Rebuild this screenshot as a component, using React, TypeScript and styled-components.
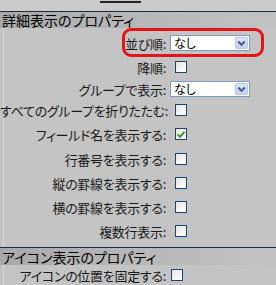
import React from "react";
import styled, { createGlobalStyle } from "styled-components";

const Global = createGlobalStyle`
  html, body { margin: 0; padding: 0; background: #c4c4c4; }
  body { width: 276px; height: 285px; overflow: hidden; }
  * { box-sizing: border-box; }
`;

const Page = styled.div`
  position: relative;
  width: 276px;
  height: 285px;
  background: #c4c4c4;
  font-family: "Noto Sans CJK JP", "Noto Sans", sans-serif;
  font-feature-settings: "palt";
  color: #111;
  overflow: hidden;
`;

const TopStrip = styled.div`
  height: 11px;
  background: #cbcbcb;
  display: flex;
  align-items: flex-start;
`;

const TabMark = styled.div`
  margin-left: 100px;
  margin-top: 1px;
  width: 41px;
  height: 2px;
  background: #262626;
`;

const SectionHeader = styled.div<{ $h: number }>`
  height: ${(p) => p.$h}px;
  border-top: 1px solid #1e2d3d;
  background: linear-gradient(90deg, #a9a9a9 0%, #b6b6b6 45%, #c2c2c2 100%);
  padding-left: 2px;
  display: flex;
  align-items: center;
  font-size: 14px;
  line-height: 1;
  color: #000;
  white-space: nowrap;
`;

const Body = styled.div<{ $pt: number; $pb: number }>`
  padding-top: ${(p) => p.$pt}px;
  padding-bottom: ${(p) => p.$pb}px;
  background: linear-gradient(90deg, #c2c2c2 0 3px, #d6d6d6 3px 4px, #c4c4c4 4px);
  display: flex;
  flex-direction: column;
`;

const Row = styled.div<{ $h: number; $label: number }>`
  height: ${(p) => p.$h}px;
  display: grid;
  grid-template-columns: ${(p) => p.$label}px 1fr;
  column-gap: 2px;
  align-items: center;
`;

const Label = styled.div`
  text-align: right;
  padding-right: 2px;
  font-size: 13px;
  line-height: 1;
  white-space: nowrap;
  color: #1a1a1a;
  letter-spacing: -0.3px;
`;

const Check = styled.span<{ $ml: number }>`
  margin-left: ${(p) => p.$ml}px;
  width: 12px;
  height: 12px;
  border: 1px solid #22446a;
  background: linear-gradient(135deg, #e4e4e0 0%, #f6f6f4 60%, #ffffff 100%);
  display: flex;
  align-items: center;
  justify-content: center;
`;

const SelectBox = styled.div`
  width: 80px;
  height: 16px;
  border: 1px solid #7f9db9;
  background: #fff;
  display: flex;
  align-items: center;
  justify-content: space-between;
  padding-left: 3px;
  padding-right: 1px;
  font-size: 12px;
  line-height: 1;
  color: #000;
`;

const DropBtn = styled.span`
  width: 13px;
  height: 12px;
  border-radius: 2px;
  background: linear-gradient(180deg, #dbe5fb 0%, #c3d3f6 100%);
  border: 1px solid #b4c6ee;
  display: flex;
  align-items: center;
  justify-content: center;
`;

const Highlight = styled.div`
  position: absolute;
  left: 122px;
  top: 28px;
  width: 142px;
  height: 29px;
  border: 3px solid #e4141a;
  border-radius: 9px;
  pointer-events: none;
`;

const Chevron = () => (
  <svg width="9" height="7" viewBox="0 0 9 7">
    <path d="M1.2 1.5 L4.5 4.8 L7.8 1.5" fill="none" stroke="#4a5e88" strokeWidth="2" />
  </svg>
);

const Tick = () => (
  <svg width="10" height="9" viewBox="0 0 10 9">
    <path d="M1.6 4.4 L4 6.8 L8.4 1.8" fill="none" stroke="#2a9a2a" strokeWidth="2" />
  </svg>
);

type Item = { label: string; kind: "select" | "check" | "checked"; h: number };

const items: Item[] = [
  { label: "並び順:", kind: "select", h: 24 },
  { label: "降順:", kind: "check", h: 24 },
  { label: "グループで表示:", kind: "select", h: 20 },
  { label: "すべてのグループを折りたたむ:", kind: "check", h: 22 },
  { label: "フィールド名を表示する:", kind: "checked", h: 26 },
  { label: "行番号を表示する:", kind: "check", h: 24 },
  { label: "縦の罫線を表示する:", kind: "check", h: 24 },
  { label: "横の罫線を表示する:", kind: "check", h: 24 },
  { label: "複数行表示:", kind: "check", h: 24 },
];

export default function App() {
  return (
    <Page>
      <Global />
      <TopStrip>
        <TabMark />
      </TopStrip>
      <SectionHeader $h={17}>詳細表示のプロパティ</SectionHeader>
      <Body $pt={3} $pb={4}>
        {items.map((it) => (
          <Row key={it.label} $h={it.h} $label={168}>
            <Label>{it.label}</Label>
            {it.kind === "select" ? (
              <SelectBox>
                <span>なし</span>
                <DropBtn>
                  <Chevron />
                </DropBtn>
              </SelectBox>
            ) : (
              <Check $ml={5}>{it.kind === "checked" ? <Tick /> : null}</Check>
            )}
          </Row>
        ))}
      </Body>
      <SectionHeader $h={18}>アイコン表示のプロパティ</SectionHeader>
      <Body $pt={0} $pb={0}>
        <Row $h={20} $label={168}>
          <Label>アイコンの位置を固定する:</Label>
          <Check $ml={1}></Check>
        </Row>
      </Body>
      <Highlight />
    </Page>
  );
}
